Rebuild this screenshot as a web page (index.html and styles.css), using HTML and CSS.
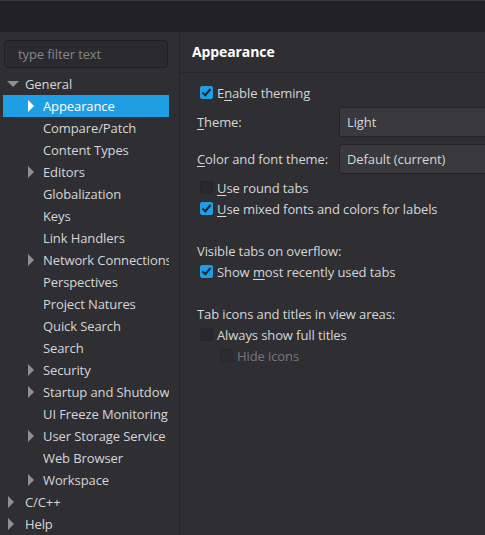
FILE: index.html
```html
<!DOCTYPE html>
<html lang="en">
<head>
  <meta charset="UTF-8">
  <title>Preferences</title>
  <link rel="stylesheet" href="styles.css">
</head>
<body>

  <!-- Bara de titlu -->
  <div class="titlebar"></div>

  <div class="main">

    <!-- Arbore preferinte -->
    <div class="sidebar">
      <div class="filter">type filter text</div>
      <ul class="tree">
        <li class="row lvl1"><span class="twisty open"></span>General</li>
        <li class="row lvl2 selected"><span class="twisty"></span>Appearance</li>
        <li class="row lvl2"><span class="twisty none"></span>Compare/Patch</li>
        <li class="row lvl2"><span class="twisty none"></span>Content Types</li>
        <li class="row lvl2"><span class="twisty"></span>Editors</li>
        <li class="row lvl2"><span class="twisty none"></span>Globalization</li>
        <li class="row lvl2"><span class="twisty none"></span>Keys</li>
        <li class="row lvl2"><span class="twisty none"></span>Link Handlers</li>
        <li class="row lvl2"><span class="twisty"></span>Network Connections</li>
        <li class="row lvl2"><span class="twisty none"></span>Perspectives</li>
        <li class="row lvl2"><span class="twisty none"></span>Project Natures</li>
        <li class="row lvl2"><span class="twisty none"></span>Quick Search</li>
        <li class="row lvl2"><span class="twisty none"></span>Search</li>
        <li class="row lvl2"><span class="twisty"></span>Security</li>
        <li class="row lvl2"><span class="twisty"></span>Startup and Shutdown</li>
        <li class="row lvl2"><span class="twisty none"></span>UI Freeze Monitoring</li>
        <li class="row lvl2"><span class="twisty"></span>User Storage Service</li>
        <li class="row lvl2"><span class="twisty none"></span>Web Browser</li>
        <li class="row lvl2"><span class="twisty"></span>Workspace</li>
        <li class="row lvl1"><span class="twisty"></span>C/C++</li>
        <li class="row lvl1"><span class="twisty"></span>Help</li>
      </ul>
    </div>

    <!-- Pagina Appearance -->
    <div class="page">
      <div class="page-header">Appearance</div>
      <div class="page-body">
        <label class="check"><span class="box checked"></span><span>E<u>n</u>able theming</span></label>

        <div class="field first">
          <span class="field-label"><u>T</u>heme:</span>
          <div class="combo">Light</div>
        </div>
        <div class="field">
          <span class="field-label"><u>C</u>olor and font theme:</span>
          <div class="combo">Default (current)</div>
        </div>

        <label class="check"><span class="box"></span><span><u>U</u>se round tabs</span></label>
        <label class="check"><span class="box checked"></span><span><u>U</u>se mixed fonts and colors for labels</span></label>

        <div class="group-label">Visible tabs on overflow:</div>
        <label class="check"><span class="box checked"></span><span>Show <u>m</u>ost recently used tabs</span></label>

        <div class="group-label">Tab icons and titles in view areas:</div>
        <label class="check"><span class="box"></span><span>Always show full titles</span></label>
        <label class="check nested disabled"><span class="box"></span><span>Hide icons</span></label>
      </div>
    </div>

  </div>

</body>
</html>
```

FILE: styles.css
```css
body {
  margin: 0;
  width: 485px;
  height: 535px;
  overflow: hidden;
  background-color: #2e2e33;
  color: #d6d6d6;
  font-family: "Open Sans", "Noto Sans", sans-serif;
  font-size: 13px;
  letter-spacing: -0.1px;
}

.titlebar {
  height: 32px;
  background-color: #222226;
  border-top: 1px solid #38383c;
  box-sizing: border-box;
}

.main {
  display: flex;
  height: 503px;
}

/* Stanga - arbore */

.sidebar {
  width: 179px;
  flex-shrink: 0;
  border-right: 1px solid #252529;
  overflow: hidden;
}

.filter {
  margin: 8px 11px 0 4px;
  height: 28px;
  box-sizing: border-box;
  padding-left: 13px;
  line-height: 26px;
  border: 1px solid #1f1f22;
  border-radius: 4px;
  background-color: #2b2b2f;
  color: #85858a;
}

.tree {
  list-style: none;
  margin: 5px 0 0 0;
  padding: 0;
}

.row {
  display: flex;
  align-items: center;
  height: 22px;
  white-space: nowrap;
  overflow: hidden;
  margin-right: 10px;
}

.row.lvl1 {
  padding-left: 8px;
}

.row.lvl2 {
  margin-left: 3px;
  padding-left: 25px;
}

.row.selected {
  background-color: #1f9ee3;
  color: #ffffff;
}

.twisty {
  width: 0;
  height: 0;
  border-top: 6px solid transparent;
  border-bottom: 6px solid transparent;
  border-left: 6px solid #8f8f94;
  margin-right: 11px;
  flex-shrink: 0;
}

.lvl2 .twisty {
  margin-right: 9px;
}

.twisty.none {
  border-left-color: transparent;
}

.twisty.open {
  border-left: 6px solid transparent;
  border-right: 6px solid transparent;
  border-top: 6px solid #8f8f94;
  border-bottom: 0;
  margin-left: -1px;
  margin-right: 6px;
}

.selected .twisty {
  border-left-color: #ffffff;
}

/* Dreapta - pagina */

.page {
  flex: 1;
  overflow: hidden;
}

.page-header {
  height: 41px;
  line-height: 40px;
  padding-left: 12px;
  font-size: 14px;
  font-weight: bold;
  color: #ffffff;
  border-bottom: 1px solid #27272b;
  box-sizing: border-box;
}

.page-body {
  padding: 9px 0 0 17px;
}

u {
  text-decoration: underline;
  text-underline-offset: 2px;
}

.check {
  display: flex;
  align-items: center;
  height: 21px;
  padding-left: 3px;
  white-space: nowrap;
}

.box {
  width: 13px;
  height: 13px;
  border-radius: 2px;
  background-color: #29292d;
  border: 1px solid #26262a;
  box-sizing: border-box;
  margin-right: 4px;
  flex-shrink: 0;
  position: relative;
}

.box.checked {
  background-color: #1f9ee3;
  border-color: #1f9ee3;
}

.box.checked::after {
  content: "";
  position: absolute;
  left: 3px;
  top: 0px;
  width: 3px;
  height: 7px;
  border: solid #1c2733;
  border-width: 0 2px 2px 0;
  transform: rotate(40deg);
}

.check.nested {
  padding-left: 23px;
}

.check.disabled {
  color: #77777c;
}

.check.disabled .box {
  background-color: #2c2c30;
  border-color: #28282c;
}

.field {
  display: flex;
  align-items: center;
  margin-top: 7px;
}

.field.first {
  margin-top: 4px;
}

.field-label {
  width: 142px;
  flex-shrink: 0;
  white-space: nowrap;
}

.combo {
  flex: 1;
  height: 30px;
  line-height: 28px;
  box-sizing: border-box;
  padding-left: 7px;
  margin-right: -10px;
  background-color: #38383d;
  border: 1px solid #242428;
  border-radius: 3px;
  white-space: nowrap;
}

.field + .check {
  margin-top: 3px;
}

.group-label {
  height: 20px;
  line-height: 20px;
  margin-top: 22px;
}
```
